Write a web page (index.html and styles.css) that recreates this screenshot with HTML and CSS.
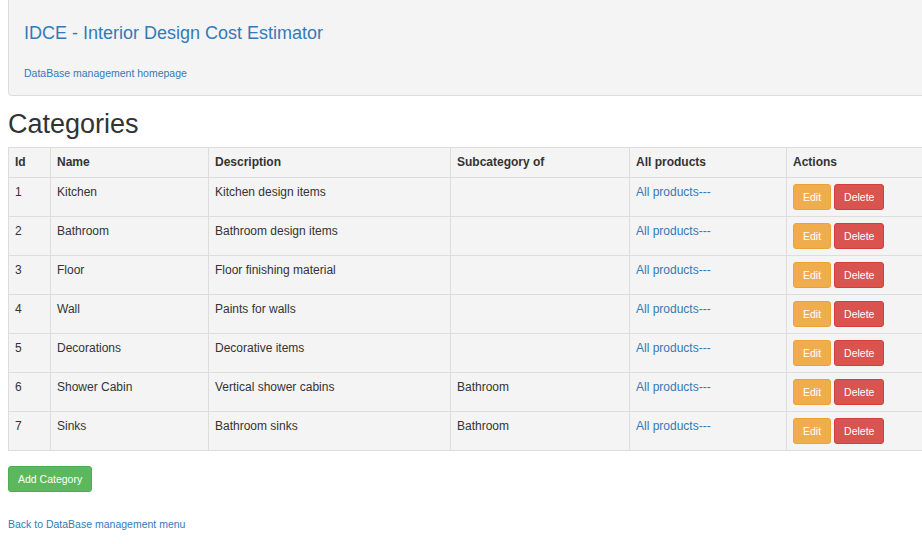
FILE: index.html
```html
<!DOCTYPE html>
<html>
<head>
<meta charset="utf-8">
<link rel="stylesheet" href="styles.css">
</head>
<body>
<div class="page">
  <div class="banner">
    <a class="brand" href="#">IDCE - Interior Design Cost Estimator</a>
    <a class="sublink" href="#">DataBase management homepage</a>
  </div>
  <h2 class="title">Categories</h2>
  <table class="grid">
    <colgroup>
      <col class="c-id"><col class="c-name"><col class="c-desc"><col class="c-sub"><col class="c-all"><col class="c-act">
    </colgroup>
    <thead>
      <tr><th>Id</th><th>Name</th><th>Description</th><th>Subcategory of</th><th>All products</th><th>Actions</th></tr>
    </thead>
    <tbody>
      <tr><td>1</td><td>Kitchen</td><td>Kitchen design items</td><td></td><td><a href="#">All products---</a></td><td><span class="btn edit">Edit</span><span class="btn del">Delete</span></td></tr>
      <tr><td>2</td><td>Bathroom</td><td>Bathroom design items</td><td></td><td><a href="#">All products---</a></td><td><span class="btn edit">Edit</span><span class="btn del">Delete</span></td></tr>
      <tr><td>3</td><td>Floor</td><td>Floor finishing material</td><td></td><td><a href="#">All products---</a></td><td><span class="btn edit">Edit</span><span class="btn del">Delete</span></td></tr>
      <tr><td>4</td><td>Wall</td><td>Paints for walls</td><td></td><td><a href="#">All products---</a></td><td><span class="btn edit">Edit</span><span class="btn del">Delete</span></td></tr>
      <tr><td>5</td><td>Decorations</td><td>Decorative items</td><td></td><td><a href="#">All products---</a></td><td><span class="btn edit">Edit</span><span class="btn del">Delete</span></td></tr>
      <tr><td>6</td><td>Shower Cabin</td><td>Vertical shower cabins</td><td>Bathroom</td><td><a href="#">All products---</a></td><td><span class="btn edit">Edit</span><span class="btn del">Delete</span></td></tr>
      <tr><td>7</td><td>Sinks</td><td>Bathroom sinks</td><td>Bathroom</td><td><a href="#">All products---</a></td><td><span class="btn edit">Edit</span><span class="btn del">Delete</span></td></tr>
    </tbody>
  </table>
  <div class="addrow"><span class="btn add">Add Category</span></div>
  <a class="back" href="#">Back to DataBase management menu</a>
</div>
</body>
</html>
```

FILE: styles.css
```css
html, body {
  margin: 0;
  padding: 0;
  background: #fff;
  overflow: hidden;
}
body {
  font-family: "Liberation Sans", Arial, sans-serif;
  font-size: 12px;
  line-height: 1.42857;
  color: #333;
}
a {
  color: #337ab7;
  text-decoration: none;
}
.page {
  width: 1000px;
  padding: 0 0 0 8px;
}
.banner {
  display: flex;
  flex-direction: column;
  align-items: flex-start;
  background: #f4f4f4;
  border: 1px solid #ddd;
  border-top: none;
  border-radius: 0 0 4px 4px;
  padding: 21px 15px 14px;
  height: 60px;
}
.brand {
  font-size: 18px;
  line-height: 24px;
}
.sublink {
  font-size: 10.5px;
  line-height: 15px;
  margin-top: 21px;
}
.title {
  font-size: 27px;
  font-weight: 500;
  line-height: 33px;
  margin: 12px 0 6px;
  color: #333;
}
.grid {
  border-collapse: collapse;
  table-layout: fixed;
  width: 960px;
  background: #f4f4f4;
  border: 1px solid #ddd;
}
.c-id { width: 42px; }
.c-name { width: 158px; }
.c-desc { width: 242px; }
.c-sub { width: 179px; }
.c-all { width: 157px; }
.c-act { width: 182px; }
.grid th, .grid td {
  border: 1px solid #ddd;
  padding: 6px 6px;
  text-align: left;
  vertical-align: top;
  line-height: 17px;
}
.grid th {
  font-weight: bold;
}
.grid td {
  height: 26px;
}
.btn {
  display: inline-block;
  vertical-align: top;
  height: 26px;
  line-height: 24px;
  padding: 0 9px;
  font-size: 10.5px;
  color: #fff;
  border-radius: 3px;
  box-sizing: border-box;
}
.edit {
  background: #f0ad4e;
  border: 1px solid #eea236;
}
.del {
  background: #d9534f;
  border: 1px solid #d43f3a;
  margin-left: 3px;
}
.addrow {
  margin-top: 15px;
}
.add {
  background: #5cb85c;
  border: 1px solid #4cae4c;
}
.back {
  display: inline-block;
  font-size: 10.5px;
  line-height: 15px;
  margin-top: 25px;
}
```
